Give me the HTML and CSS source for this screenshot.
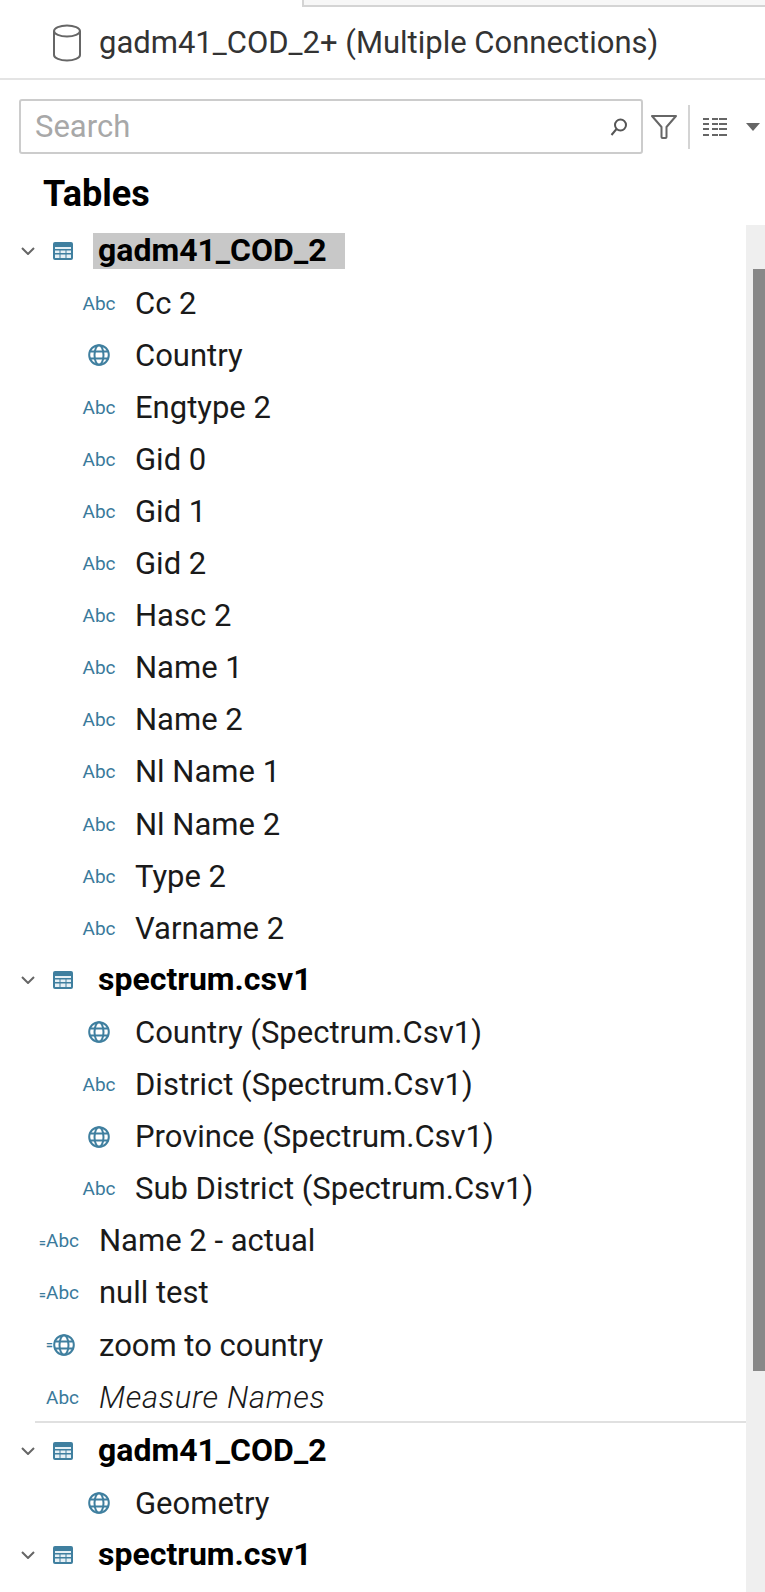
FILE: index.html
```html
<!DOCTYPE html>
<html lang="en">
<head>
    <meta charset="UTF-8">
    <title>Data pane</title>
    <link rel="stylesheet" href="styles.css">
</head>
<body>
<svg class="defs" width="0" height="0">
    <symbol id="i-table" viewBox="0 0 20 18">
        <rect x="0" y="0" width="20" height="18" rx="2" fill="#3f7f9f"/>
        <path d="M2 5h16v2h-16zM2 8.5h4.500v2.500h-4.500zM7.500 8.500h5v2.500h-5zM13.500 8.500h4.500v2.500h-4.500zM2 12.500h4.500v3.500h-4.500zM7.500 12.500h5v3.500h-5zM13.500 12.500h4.500v3.500h-4.500z" fill="#e6f0f5"/>
    </symbol>
    <symbol id="i-globe" viewBox="0 0 22 22">
        <g fill="none" stroke="#3f7f9f" stroke-width="2">
            <circle cx="11" cy="11" r="9.800"/>
            <ellipse cx="11" cy="11" rx="4.500" ry="9.800"/>
            <path d="M1.500 7.500h19M1.500 14.500h19"/>
        </g>
    </symbol>
    <symbol id="i-chev" viewBox="0 0 14 8">
        <path d="M1 1l6 6 6-6" fill="none" stroke="#666" stroke-width="2"/>
    </symbol>
</svg>

<div class="tab-edge"></div>

<header class="source">
    <svg class="cyl" viewBox="0 0 30 38">
        <g fill="none" stroke="#666" stroke-width="2">
            <ellipse cx="15" cy="7" rx="13" ry="5.500"/>
            <path d="M2 7v24c0 3 6 5.500 13 5.500s13-2.500 13-5.500v-24"/>
        </g>
    </svg>
    <span>gadm41_COD_2+ (Multiple Connections)</span>
</header>

<div class="toolbar">
    <div class="search">
        <span class="search-text">Search</span>
        <svg class="search-icon" viewBox="0 0 18 18">
            <circle cx="10.500" cy="7" r="5.500" fill="none" stroke="#555" stroke-width="2"/>
            <path d="M6.500 11l-5 6" stroke="#555" stroke-width="2"/>
        </svg>
    </div>
    <svg class="filter-icon" viewBox="0 0 26 24">
        <path d="M1 1h24l-9.500 11v10a1 1 0 0 1-1 1h-3a1 1 0 0 1-1-1v-10z" fill="none" stroke="#666" stroke-width="2" stroke-linejoin="round"/>
    </svg>
    <div class="divider"></div>
    <svg class="view-icon" viewBox="0 0 24 18">
        <path d="M0 0h6v2h-6zM9 0h6v2h-6zM16 0h8v2h-8zM0 5h6v2h-6zM9 5h6v2h-6zM16 5h8v2h-8zM0 10h6v2h-6zM9 10h6v2h-6zM16 10h8v2h-8zM0 16h6v2h-6zM9 16h6v2h-6zM16 16h8v2h-8z" fill="#666"/>
    </svg>
    <div class="caret"></div>
</div>

<h2 class="pane-title">Tables</h2>

<div class="pane">
    <div class="tree">
        <div class="row table-row">
            <svg class="chev"><use href="#i-chev"/></svg>
            <svg class="table-icon"><use href="#i-table"/></svg>
            <span class="table-name selected">gadm41_COD_2</span>
        </div>
        <div class="row field"><span class="slot"><span class="abc">Abc</span></span><span>Cc 2</span></div>
        <div class="row field"><span class="slot"><svg class="globe"><use href="#i-globe"/></svg></span><span>Country</span></div>
        <div class="row field"><span class="slot"><span class="abc">Abc</span></span><span>Engtype 2</span></div>
        <div class="row field"><span class="slot"><span class="abc">Abc</span></span><span>Gid 0</span></div>
        <div class="row field"><span class="slot"><span class="abc">Abc</span></span><span>Gid 1</span></div>
        <div class="row field"><span class="slot"><span class="abc">Abc</span></span><span>Gid 2</span></div>
        <div class="row field"><span class="slot"><span class="abc">Abc</span></span><span>Hasc 2</span></div>
        <div class="row field"><span class="slot"><span class="abc">Abc</span></span><span>Name 1</span></div>
        <div class="row field"><span class="slot"><span class="abc">Abc</span></span><span>Name 2</span></div>
        <div class="row field"><span class="slot"><span class="abc">Abc</span></span><span>Nl Name 1</span></div>
        <div class="row field"><span class="slot"><span class="abc">Abc</span></span><span>Nl Name 2</span></div>
        <div class="row field"><span class="slot"><span class="abc">Abc</span></span><span>Type 2</span></div>
        <div class="row field"><span class="slot"><span class="abc">Abc</span></span><span>Varname 2</span></div>

        <div class="row table-row">
            <svg class="chev"><use href="#i-chev"/></svg>
            <svg class="table-icon"><use href="#i-table"/></svg>
            <span class="table-name">spectrum.csv1</span>
        </div>
        <div class="row field"><span class="slot"><svg class="globe"><use href="#i-globe"/></svg></span><span>Country (Spectrum.Csv1)</span></div>
        <div class="row field"><span class="slot"><span class="abc">Abc</span></span><span>District (Spectrum.Csv1)</span></div>
        <div class="row field"><span class="slot"><svg class="globe"><use href="#i-globe"/></svg></span><span>Province (Spectrum.Csv1)</span></div>
        <div class="row field"><span class="slot"><span class="abc">Abc</span></span><span>Sub District (Spectrum.Csv1)</span></div>

        <div class="row calc"><span class="slot"><span class="abc"><span class="eq">=</span>Abc</span></span><span>Name 2 - actual</span></div>
        <div class="row calc"><span class="slot"><span class="abc"><span class="eq">=</span>Abc</span></span><span>null test</span></div>
        <div class="row calc"><span class="slot"><span class="abc eq">=</span><svg class="globe"><use href="#i-globe"/></svg></span><span>zoom to country</span></div>
        <div class="row calc"><span class="slot"><span class="abc">Abc</span></span><span class="generated">Measure Names</span></div>

        <div class="section">
            <div class="row table-row">
                <svg class="chev"><use href="#i-chev"/></svg>
                <svg class="table-icon"><use href="#i-table"/></svg>
                <span class="table-name">gadm41_COD_2</span>
            </div>
            <div class="row field"><span class="slot"><svg class="globe"><use href="#i-globe"/></svg></span><span>Geometry</span></div>
            <div class="row table-row">
                <svg class="chev"><use href="#i-chev"/></svg>
                <svg class="table-icon"><use href="#i-table"/></svg>
                <span class="table-name">spectrum.csv1</span>
            </div>
        </div>
    </div>
    <div class="scroll-track"><div class="scroll-thumb"></div></div>
</div>
</body>
</html>
```

FILE: styles.css
```css
html, body {
    margin: 0;
    padding: 0;
    background: #fff;
}

body {
    width: 765px;
    height: 1592px;
    overflow: hidden;
    font-family: Roboto, "Liberation Sans", sans-serif;
    font-size: 31px;
    color: #1a1a1a;
}

.defs {
    display: block;
    height: 0;
}

.tab-edge {
    height: 5px;
    margin-left: 302px;
    background: #f7f7f7;
    border-left: 2px solid #d4d4d4;
    border-bottom: 2px solid #d4d4d4;
}

.source {
    display: flex;
    align-items: center;
    height: 71px;
    padding-left: 52px;
    border-bottom: 2px solid #e4e4e4;
    color: #333;
}

.cyl {
    width: 30px;
    height: 38px;
    margin-right: 17px;
}

.toolbar {
    display: flex;
    align-items: center;
    height: 55px;
    margin-top: 19px;
    padding-left: 19px;
}

.search {
    display: flex;
    align-items: center;
    justify-content: space-between;
    box-sizing: border-box;
    width: 624px;
    height: 55px;
    padding: 0 13px 0 14px;
    border: 2px solid #ccc;
    border-radius: 3px;
}

.search-text {
    color: #a8a8a8;
}

.search-icon {
    width: 18px;
    height: 18px;
}

.filter-icon {
    width: 26px;
    height: 24px;
    margin-left: 8px;
}

.divider {
    width: 2px;
    height: 44px;
    margin-left: 11px;
    background: #d4d4d4;
}

.view-icon {
    width: 24px;
    height: 18px;
    margin-left: 13px;
}

.caret {
    width: 0;
    height: 0;
    margin-left: 19px;
    border-left: 7px solid transparent;
    border-right: 7px solid transparent;
    border-top: 8px solid #666;
}

.pane-title {
    height: 71px;
    margin: 0;
    padding-left: 43px;
    font-size: 36px;
    font-weight: 700;
    line-height: 80px;
    color: #000;
}

.pane {
    display: flex;
    height: 1367px;
}

.tree {
    width: 746px;
}

.row {
    display: flex;
    align-items: center;
    height: 52.100px;
    white-space: nowrap;
}

.table-row {
    padding-left: 21px;
    font-size: 32px;
    font-weight: 700;
    color: #000;
}

.chev {
    width: 14px;
    height: 8px;
    margin-right: 18px;
}

.table-icon {
    width: 20px;
    height: 18px;
    margin-right: 20px;
}

.table-name {
    box-sizing: border-box;
    height: 36px;
    padding-left: 5px;
    line-height: 34px;
}

.selected {
    width: 252px;
    background: #c8c8c8;
}

.slot {
    display: flex;
    align-items: center;
}

.field {
    padding-left: 79px;
}

.field .slot {
    justify-content: center;
    width: 40px;
    margin-right: 16px;
}

.calc {
    padding-left: 31px;
}

.calc .slot {
    justify-content: flex-end;
    width: 48px;
    margin-right: 20px;
}

.calc .globe {
    margin-right: 4px;
}

.abc {
    font-size: 19px;
    color: #3a7a9b;
}

.eq {
    font-size: 12px;
    font-weight: 700;
}

.globe {
    width: 22px;
    height: 22px;
}

.generated {
    font-style: italic;
    font-weight: 300;
    letter-spacing: 0.700px;
}

.section {
    margin-top: -2px;
    margin-left: 35px;
    padding-top: 2px;
    border-top: 2px solid #e0e0e0;
}

.section .row {
    margin-left: -35px;
}

.scroll-track {
    width: 19px;
    padding-top: 44px;
    background: #efefef;
}

.scroll-thumb {
    height: 1102px;
    margin-left: 7px;
    background: #888;
}
```
